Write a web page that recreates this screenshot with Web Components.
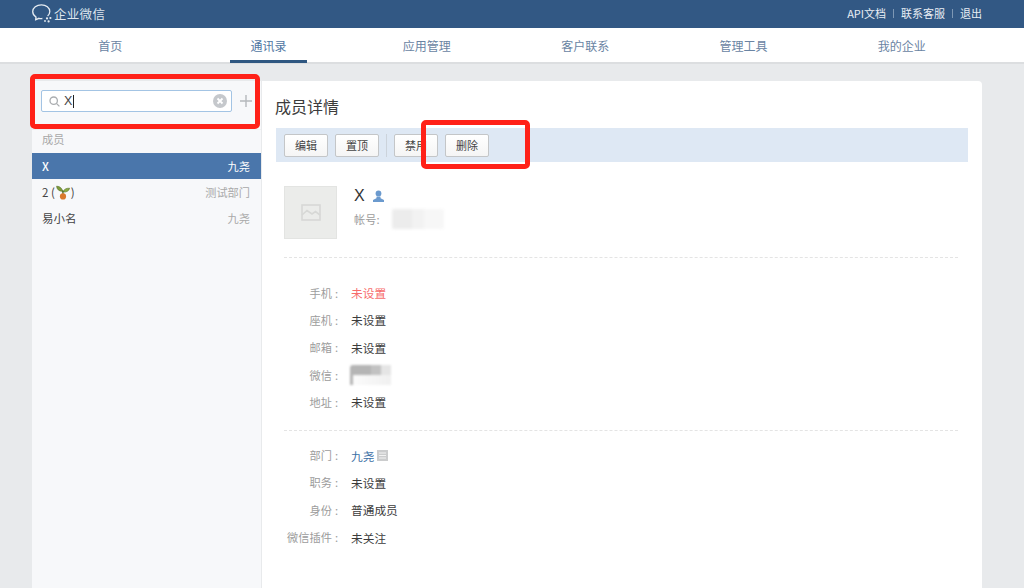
<!DOCTYPE html>
<html lang="zh">
<head>
<meta charset="utf-8">
<title>成员详情</title>
<style>
  html, body { margin: 0; height: 100%; }
  body {
    position: relative;
    width: 1024px;
    height: 588px;
    overflow: hidden;
    background: #e8eaec;
    font-family: "Noto Sans CJK SC", "Liberation Sans", sans-serif;
    font-size: 11.5px;
    color: #333;
  }
  .main { display: flex; align-items: stretch; gap: 1px; height: 524px; padding: 17px 42px 0 32px; box-sizing: border-box; }
</style>
</head>
<body>
<app-header></app-header>
<app-nav></app-nav>
<div class="main">
  <member-sidebar></member-sidebar>
  <detail-panel></detail-panel>
</div>
<red-mark style="left:30px;top:73.5px;width:230px;height:55.5px"></red-mark>
<red-mark style="left:421px;top:120px;width:109px;height:48.5px"></red-mark>

<script>
class AppHeader extends HTMLElement {
  connectedCallback() {
    this.attachShadow({ mode: 'open' });
    this.shadowRoot.innerHTML = `
      <style>
        :host { display: flex; align-items: center; justify-content: space-between; height: 28px; padding: 0 42px 2px 31px; box-sizing: border-box; background: #325884; color: #e9eef4; font-size: 11px; }
        .logo { display: flex; align-items: center; gap: 1px; font-size: 12.5px; color: #dfe6ee; letter-spacing: .3px; }
        .links { display: flex; align-items: center; }
        i { width: 1px; height: 9px; margin: 0 7px; background: #7d97b4; }
        svg { display: block; }
      </style>
      <div class="logo">
        <svg width="22" height="20" viewBox="0 0 22 20" fill="none" stroke="#e6ecf2" stroke-width="1.3">
          <path d="M16.6 13 C18 11.8 18.8 10.2 18.8 8.5 C18.8 4.6 15.1 1.8 10.4 1.8 C5.6 1.8 1.7 4.8 1.7 8.6 C1.7 11.2 3.2 13 5 14.1 L4.7 16.8 L8 15.3 C9 15.5 10 15.6 11.4 15.5"/>
          <circle cx="16" cy="15.4" r="1.1" fill="#e6ecf2" stroke="none"/>
          <circle cx="19.4" cy="15" r="1.1" fill="#e6ecf2" stroke="none"/>
          <circle cx="14" cy="18" r="0.9" fill="#e6ecf2" stroke="none"/>
          <circle cx="17.6" cy="18.4" r="1.1" fill="#e6ecf2" stroke="none"/>
        </svg>
        <span>企业微信</span>
      </div>
      <div class="links"><span>API文档</span><i></i><span>联系客服</span><i></i><span>退出</span></div>
    `;
  }
}
customElements.define('app-header', AppHeader);

class AppNav extends HTMLElement {
  connectedCallback() {
    this.attachShadow({ mode: 'open' });
    const items = ['首页', '通讯录', '应用管理', '客户联系', '管理工具', '我的企业'];
    this.shadowRoot.innerHTML = `
      <style>
        :host { display: grid; grid-template-columns: repeat(6, 1fr); height: 36px; padding: 0 43px 0 31px; background: #fff; border-bottom: 2px solid #dcdee0; box-sizing: border-box; font-size: 12px; color: #6a84a3; }
        a { display: flex; align-items: center; justify-content: center; position: relative; }
        a.on { color: #4f76a2; }
        a.on::after { content: ''; position: absolute; left: 41px; right: 41px; bottom: -1px; height: 3px; background: #2f5781; }
      </style>
      ${items.map((t, i) => `<a class="${i === 1 ? 'on' : ''}">${t}</a>`).join('')}
    `;
  }
}
customElements.define('app-nav', AppNav);

class MemberRow extends HTMLElement {
  connectedCallback() {
    this.attachShadow({ mode: 'open' });
    this.shadowRoot.innerHTML = `
      <style>
        :host { display: flex; align-items: center; justify-content: space-between; height: 26px; padding: 0 11px 0 10px; color: #444; font-size: 11.5px; }
        :host([selected]) { background: #4a76ab; color: #fff; }
        .dept { color: #a9a9a9; font-size: 11.2px; }
        :host([selected]) .dept { color: #fff; }
        .name { display: flex; align-items: center; }
      </style>
      <span class="name"><slot></slot></span>
      <span class="dept">${this.getAttribute('dept')}</span>
    `;
  }
}
customElements.define('member-row', MemberRow);

class MemberSidebar extends HTMLElement {
  connectedCallback() {
    this.attachShadow({ mode: 'open' });
    this.shadowRoot.innerHTML = `
      <style>
        :host { display: block; width: 229px; flex: none; background: #f7f8fa; }
        .search { display: flex; align-items: center; height: 40px; padding: 0 7px 8px 9px; border-bottom: 1px solid #eef0f2; }
        .box { display: flex; align-items: center; width: 191px; height: 22px; box-sizing: border-box; padding: 0 4px 0 7px; background: #fff; border: 1px solid #a3c4e4; border-radius: 2px; font-family: "Liberation Sans", sans-serif; font-size: 12.5px; color: #444; }
        .q { flex: 1; display: flex; align-items: center; margin-left: 4px; }
        .caret { display: inline-block; width: 1px; height: 13px; background: #222; margin-left: 1px; }
        .plus { margin-left: 8px; }
        svg { display: block; flex: none; }
        .title { padding: 0 10px; height: 23px; line-height: 18px; box-sizing: border-box; color: #a8a8a8; font-size: 11.2px; }
      </style>
      <div class="search">
        <div class="box">
          <svg width="11" height="11" viewBox="0 0 11 11" fill="none" stroke="#aaadb0" stroke-width="1.3"><circle cx="4.7" cy="4.7" r="3.7"/><path d="M7.4 7.4 10.4 10.4"/></svg>
          <span class="q">X<span class="caret"></span></span>
          <svg width="14" height="14" viewBox="0 0 14 14"><circle cx="7" cy="7" r="7" fill="#c5c8cc"/><path d="M4.5 4.5 9.5 9.5M9.5 4.5 4.5 9.5" stroke="#fff" stroke-width="1.8"/></svg>
        </div>
        <svg class="plus" width="12" height="12" viewBox="0 0 12 12" stroke="#b5b8bc" stroke-width="1.4"><path d="M6 0V12M0 6H12"/></svg>
      </div>
      <div class="title">成员</div>
      <member-row selected dept="九尧"><b style="font-weight:500">X</b></member-row>
      <member-row dept="测试部门">2 (<svg width="14" height="15" viewBox="0 0 14 15" style="margin:0 1px 0 1px"><path d="M6.8 6.4C6 3.2 4 1.2.6 1.2 .9 4.4 3 6.4 6.8 6.4Z" fill="#7f9c3a" stroke="#56702a" stroke-width=".6"/><path d="M7 7C7.8 4.4 10 3 13.6 3.2 13 6 10.6 7.4 7 7Z" fill="#8cab41" stroke="#56702a" stroke-width=".6"/><path d="M6.8 5.5 7 10" stroke="#4f6a26" stroke-width="1.3"/><circle cx="7" cy="11.4" r="3.1" fill="#d9772c"/></svg>)</member-row>
      <member-row dept="九尧">易小名</member-row>
    `;
  }
}
customElements.define('member-sidebar', MemberSidebar);

class ActionBtn extends HTMLElement {
  connectedCallback() {
    this.attachShadow({ mode: 'open' });
    this.shadowRoot.innerHTML = `
      <style>
        :host { display: flex; align-items: center; justify-content: center; width: 44px; height: 23px; box-sizing: border-box; padding-bottom: 1px; background: linear-gradient(#fff, #f5f5f5); border: 1px solid #c4c6c8; border-radius: 2px; font-size: 11px; color: #444; }
      </style>
      <slot></slot>
    `;
  }
}
customElements.define('action-btn', ActionBtn);

class InfoRow extends HTMLElement {
  connectedCallback() {
    this.attachShadow({ mode: 'open' });
    this.shadowRoot.innerHTML = `
      <style>
        :host { display: flex; align-items: center; height: 27.3px; font-size: 11.7px; color: #3c3c3c; }
        .k { width: 54px; flex: none; text-align: right; color: #9c9c9c; font-size: 11.2px; white-space: nowrap; }
        .k b { font-weight: 400; margin-left: 3px; }
        .v { margin-left: 13px; display: flex; align-items: center; }
      </style>
      <span class="k">${this.getAttribute('label')}<b>:</b></span>
      <span class="v"><slot></slot></span>
    `;
  }
}
customElements.define('info-row', InfoRow);

class InfoSection extends HTMLElement {
  connectedCallback() {
    this.attachShadow({ mode: 'open' });
    this.shadowRoot.innerHTML = `
      <style>
        :host { display: block; margin: 0 24px 0 22px; padding: 21px 0 15px; border-top: 1px dashed #e4e4e4; }
        :host([tight]) { padding-top: 10px; }
      </style>
      <slot></slot>
    `;
  }
}
customElements.define('info-section', InfoSection);

class DetailPanel extends HTMLElement {
  connectedCallback() {
    this.attachShadow({ mode: 'open' });
    this.shadowRoot.innerHTML = `
      <style>
        :host { display: block; flex: 1; background: #fff; border-radius: 0 4px 0 0; overflow: hidden; }
        h2 { margin: 0; padding: 8px 13px 0; height: 47px; box-sizing: border-box; font-weight: 400; font-size: 16px; line-height: 34px; color: #3c3c3c; }
        .bar { display: flex; align-items: center; gap: 7px; height: 34px; margin: 0 14px; padding: 0 8px; background: #dee8f4; }
        .bar i { width: 1px; height: 23px; background: #ccd3db; }
        .profile { display: flex; gap: 17px; margin: 24px 22px 0; height: 71px; }
        .avatar { width: 53px; height: 53px; box-sizing: border-box; display: flex; align-items: center; justify-content: center; background: #ebecea; border: 1px solid #e3e4e2; }
        .who { margin-top: -1px; }
        .name { display: flex; align-items: center; gap: 8px; height: 22px; font-family: "Liberation Sans", sans-serif; font-size: 16px; color: #333; }
        .acct { position: relative; height: 24px; display: flex; align-items: center; font-size: 11.2px; color: #9c9c9c; }
        .blob { position: absolute; left: 38px; top: 2px; width: 52px; height: 20px; border-radius: 2px; filter: blur(1.5px);
          background: linear-gradient(90deg, #ececec 0 20px, #f2f2f2 20px 32px, #f7f7f7 32px); }
        .wx { display: block; position: relative; width: 41px; height: 20px; margin: -1px 0 -1px -1px; border-radius: 3px 0 0 0; filter: blur(.8px);
          background: linear-gradient(90deg, #b5b5b5 0 21px, #c2c2c2 21px 31px, #e5e5e5 31px); }
        .wx::after { content: ''; position: absolute; left: 3px; right: 0; top: 10px; bottom: 0; background: linear-gradient(90deg, #fbfbfb, #f0f0f0); }
        .red { color: #f76c6c; }
        .link { color: #3b6fa5; }
        .tag { display: inline-flex; width: 11px; height: 11px; margin-left: 3px; margin-top: 1px; background: #cbcccd; align-items: center; justify-content: center; }
        svg { display: block; }
      </style>
      <h2>成员详情</h2>
      <div class="bar">
        <action-btn>编辑</action-btn>
        <action-btn>置顶</action-btn>
        <i></i>
        <action-btn>禁用</action-btn>
        <action-btn>删除</action-btn>
      </div>
      <div class="profile">
        <div class="avatar">
          <svg width="20" height="17" viewBox="0 0 20 17" fill="none" stroke="#d7d8d6" stroke-width="1.6"><rect x="1" y="1" width="18" height="15"/><path d="M1 11 6 6.5 11 10 14.5 7.5 19 11"/></svg>
        </div>
        <div class="who">
          <div class="name">X
            <svg width="11" height="12" viewBox="0 0 11 12" fill="#6b9ace"><circle cx="5.5" cy="3.4" r="2.9"/><path d="M3.6 6.5h3.8L7.6 8.2 11 10v2H0v-2l3.4-1.8z"/></svg>
          </div>
          <div class="acct">帐号:<span class="blob"></span></div>
        </div>
      </div>
      <info-section>
        <info-row label="手机"><span class="red">未设置</span></info-row>
        <info-row label="座机">未设置</info-row>
        <info-row label="邮箱">未设置</info-row>
        <info-row label="微信"><span class="wx"></span></info-row>
        <info-row label="地址">未设置</info-row>
      </info-section>
      <info-section tight>
        <info-row label="部门"><span class="link">九尧</span><span class="tag"><svg width="7" height="7" viewBox="0 0 7 7" stroke="#f3f3f3" stroke-width="1"><path d="M0 1H7M0 3.5H7M0 6H7"/></svg></span></info-row>
        <info-row label="职务">未设置</info-row>
        <info-row label="身份">普通成员</info-row>
        <info-row label="微信插件">未关注</info-row>
      </info-section>
    `;
  }
}
customElements.define('detail-panel', DetailPanel);

class RedMark extends HTMLElement {
  connectedCallback() {
    this.attachShadow({ mode: 'open' });
    this.shadowRoot.innerHTML = `
      <style>
        :host { display: block; position: absolute; box-sizing: border-box; border: 5px solid #ff2118; border-radius: 5px; pointer-events: none; }
      </style>
    `;
  }
}
customElements.define('red-mark', RedMark);
</script>
</body>
</html>
